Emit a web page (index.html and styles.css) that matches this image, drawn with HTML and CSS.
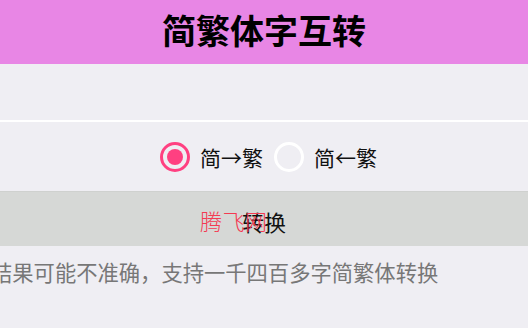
FILE: index.html
```html
<!DOCTYPE html>
<html>
  <head>
    <meta charset="utf-8">
    <title>简繁体字互转</title>
    <link rel="stylesheet" href="styles.css">
  </head>

  <body>
    <div class="header">简繁体字互转</div>
    <div class="input-area"></div>
    <div class="divider"></div>

    <div class="mode-group">
      <label class="mode">
        <span class="radio checked"></span>
        <span class="mode-text">简→繁</span>
      </label>
      <label class="mode">
        <span class="radio"></span>
        <span class="mode-text">简←繁</span>
      </label>
    </div>

    <div class="convert-btn">
      <span class="watermark">腾飞网</span>
      <span class="btn-text">转换</span>
    </div>

    <p class="note">结果可能不准确，支持一千四百多字简繁体转换</p>
  </body>
</html>
```

FILE: styles.css
```css
body {
  margin: 0;
  background-color: #efeef3;
  font-family: "Noto Sans CJK SC", "Noto Sans", sans-serif;
  color: #111;
  overflow: hidden;
}

.header {
  height: 64px;
  line-height: 60px;
  background-color: #e886e5;
  text-align: center;
  font-size: 34px;
  font-weight: bold;
  color: #000;
}

.input-area {
  height: 56px;
}

.divider {
  height: 2px;
  background: #fff;
}

.mode-group {
  height: 69px;
  display: flex;
  align-items: center;
  justify-content: center;
  padding-left: 9px;
}

.mode {
  display: flex;
  align-items: center;
}

.mode + .mode {
  margin-left: 11px;
}

.radio {
  width: 30px;
  height: 30px;
  border: 3px solid #fff;
  border-radius: 50%;
  box-sizing: border-box;
  display: flex;
  align-items: center;
  justify-content: center;
}

.radio.checked {
  border-color: #ff4081;
}

.radio.checked::after {
  content: "";
  width: 16px;
  height: 16px;
  border-radius: 50%;
  background: #ff4081;
}

.mode-text {
  margin-left: 10px;
  font-size: 21px;
  line-height: 30px;
  color: #111;
}

.convert-btn {
  height: 55px;
  background-color: #d6d8d6;
  border-top: 1px solid #cfd1cf;
  box-sizing: border-box;
  display: flex;
  justify-content: center;
  align-items: center;
  padding-top: 4px;
  position: relative;
}

.btn-text {
  font-size: 22px;
  color: #111;
}

.watermark {
  position: absolute;
  left: 200px;
  top: 12px;
  font-size: 22px;
  letter-spacing: 0.5px;
  color: #f43a52;
  font-weight: 300;
}

.note {
  margin: 0 0 0 -9px;
  padding-top: 11px;
  font-size: 21.3px;
  line-height: 30px;
  color: #777;
  white-space: nowrap;
}
```
